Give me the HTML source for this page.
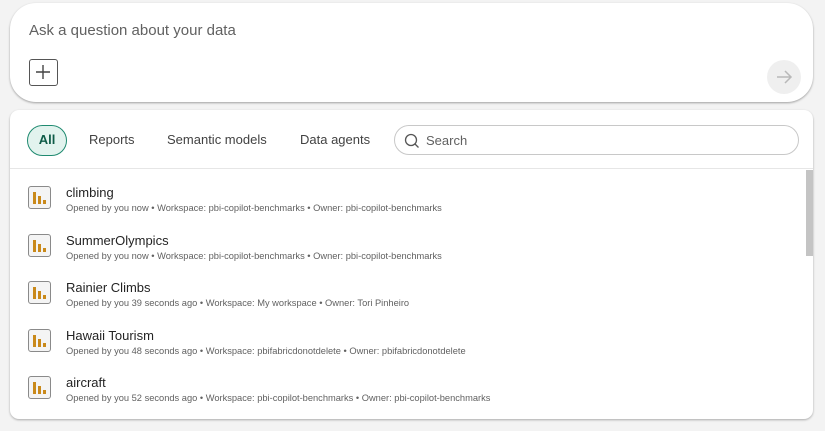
<!DOCTYPE html>
<html><head><style>
*{margin:0;padding:0;box-sizing:border-box}
body{width:825px;height:431px;background:#f3f3f3;font-family:"Liberation Sans",sans-serif;position:relative;overflow:hidden}
.top{position:absolute;left:10px;top:3px;width:803px;height:99px;background:#fff;border-radius:26px;box-shadow:0 1px 2px rgba(0,0,0,.35)}
.top .ph{position:absolute;left:19px;top:19px;font-size:15px;color:#616161}
.plus{position:absolute;left:19px;top:56px;width:29px;height:27px;border:1.5px solid #555;border-radius:3px}
.send{position:absolute;left:757px;top:57px;width:34px;height:34px;border-radius:50%;background:#efefef}
.bot{position:absolute;left:10px;top:110px;width:803px;height:309px;background:#fff;border-radius:9px;box-shadow:0 1px 2px rgba(0,0,0,.3);overflow:hidden}
.tab{position:absolute;top:30px;font-size:13px;color:#424242}
.all{position:absolute;left:17px;top:15px;width:40px;height:31px;border:1.5px solid #1f8a70;background:#e2f3ee;border-radius:16px;font-size:13px;font-weight:bold;color:#0f5c48;text-align:center;line-height:28px}
.search{position:absolute;left:384px;top:15px;width:405px;height:30px;border:1px solid #c8c8c8;border-radius:15px}
.search span{position:absolute;left:31px;top:7px;font-size:13px;color:#616161}
.div{position:absolute;left:0;top:58px;width:803px;height:1px;background:#e6e6e6}
.sb{position:absolute;left:796px;top:60px;width:7px;height:86px;background:#c4c4c4}
.row{position:absolute;left:18px}
.ic{position:absolute;left:0;top:0;width:23px;height:23px;border:1.5px solid #8a8a8a;border-radius:3px;background:#f4f4f4}
.ic i{position:absolute;bottom:4px;width:3px;background:#c9891a}
.t{position:absolute;left:38px;top:-1px;font-size:13px;color:#242424;white-space:nowrap}
.s{position:absolute;left:38px;top:17px;font-size:9.3px;color:#616161;white-space:nowrap}
</style></head><body>
<div class="top"><div class="ph">Ask a question about your data</div>
<div class="plus"><svg width="26" height="24" viewBox="0 0 26 24"><path d="M13 5v14M6 12h14" stroke="#444" stroke-width="1.4"/></svg></div>
<div class="send"><svg width="34" height="34" viewBox="0 0 34 34"><path d="M10 17h14M18 11l6 6-6 6" stroke="#b8b8b8" stroke-width="1.5" fill="none"/></svg></div></div>
<div class="bot">
<div class="all">All</div>
<div class="tab" style="left:79px;top:22px">Reports</div>
<div class="tab" style="left:157px;top:22px">Semantic models</div>
<div class="tab" style="left:290px;top:22px">Data agents</div>
<div class="search"><svg style="position:absolute;left:8px;top:6px" width="18" height="18" viewBox="0 0 18 18"><circle cx="8" cy="8" r="5.5" stroke="#555" stroke-width="1.3" fill="none"/><path d="M12 12l3.5 3.5" stroke="#555" stroke-width="1.3"/></svg><span>Search</span></div>
<div class="div"></div><div class="sb"></div>
<div class="row" style="top:76px"><div class="ic"><i style="left:4px;height:12px"></i><i style="left:9px;height:8px"></i><i style="left:14px;height:4px"></i></div><div class="t">climbing</div><div class="s">Opened by you now • Workspace: pbi-copilot-benchmarks • Owner: pbi-copilot-benchmarks</div></div>
<div class="row" style="top:124px"><div class="ic"><i style="left:4px;height:12px"></i><i style="left:9px;height:8px"></i><i style="left:14px;height:4px"></i></div><div class="t">SummerOlympics</div><div class="s">Opened by you now • Workspace: pbi-copilot-benchmarks • Owner: pbi-copilot-benchmarks</div></div>
<div class="row" style="top:171px"><div class="ic"><i style="left:4px;height:12px"></i><i style="left:9px;height:8px"></i><i style="left:14px;height:4px"></i></div><div class="t">Rainier Climbs</div><div class="s">Opened by you 39 seconds ago • Workspace: My workspace • Owner: Tori Pinheiro</div></div>
<div class="row" style="top:219px"><div class="ic"><i style="left:4px;height:12px"></i><i style="left:9px;height:8px"></i><i style="left:14px;height:4px"></i></div><div class="t">Hawaii Tourism</div><div class="s">Opened by you 48 seconds ago • Workspace: pbifabricdonotdelete • Owner: pbifabricdonotdelete</div></div>
<div class="row" style="top:266px"><div class="ic"><i style="left:4px;height:12px"></i><i style="left:9px;height:8px"></i><i style="left:14px;height:4px"></i></div><div class="t">aircraft</div><div class="s">Opened by you 52 seconds ago • Workspace: pbi-copilot-benchmarks • Owner: pbi-copilot-benchmarks</div></div>
</div>
</body></html>
